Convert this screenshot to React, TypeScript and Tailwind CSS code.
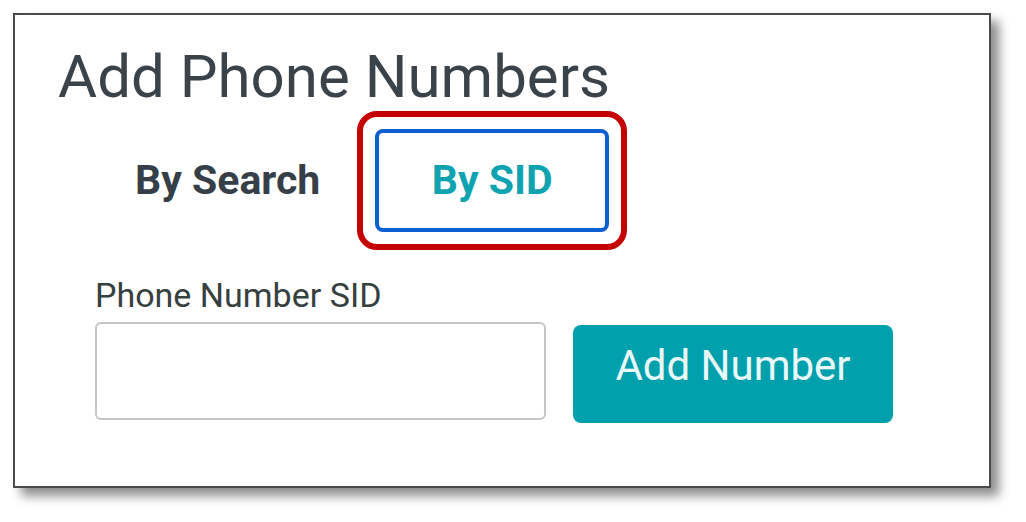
import React from 'react';

/**
 * Add Phone Numbers panel with the "By SID" tab selected
 * (red outline is the screenshot annotation round the active tab)
 */
export default function App() {
  return (
    <div className="h-[522px] w-[1026px] bg-white font-['Roboto',sans-serif]">
      <div className="ml-[13px] pt-[13px]">
        <div className="h-[475px] w-[978px] border-2 border-[#4a4a4a] bg-white shadow-[8px_8px_10px_rgba(0,0,0,0.45)]">
          {/* Titre */}
          <h1 className="ml-[43px] mt-[32px] text-[60px] leading-none text-[#3a424a]">Add Phone Numbers</h1>

          {/* Onglets */}
          <div className="mt-[4px] flex items-center">
            <span className="ml-[120px] text-[41px] font-bold leading-none text-[#363f48]">By Search</span>
            <div className="ml-[37px] rounded-[20px] border-[6px] border-[#c40000] p-[12px]">
              <div className="flex h-[103px] w-[234px] items-center justify-center rounded-[8px] border-4 border-[#0b5fd0]">
                <span className="text-[41px] font-bold leading-none text-[#0fa2b0]">By SID</span>
              </div>
            </div>
          </div>

          {/* Formulaire */}
          <div className="ml-[80px] mt-[28px]">
            <label className="block text-[34px] leading-none text-[#36403f]">Phone Number SID</label>
            <div className="mt-[10px] flex items-start gap-[27px]">
              <input className="h-[98px] w-[451px] rounded-[6px] border-2 border-[#c3c6c8] bg-white outline-none" />
              <button className="mt-[3px] h-[98px] w-[320px] rounded-[8px] bg-[#00a0ad] pb-[16px] text-[42px] leading-none text-[#e9f8f9]">
                Add Number
              </button>
            </div>
          </div>
        </div>
      </div>
    </div>
  );
}
